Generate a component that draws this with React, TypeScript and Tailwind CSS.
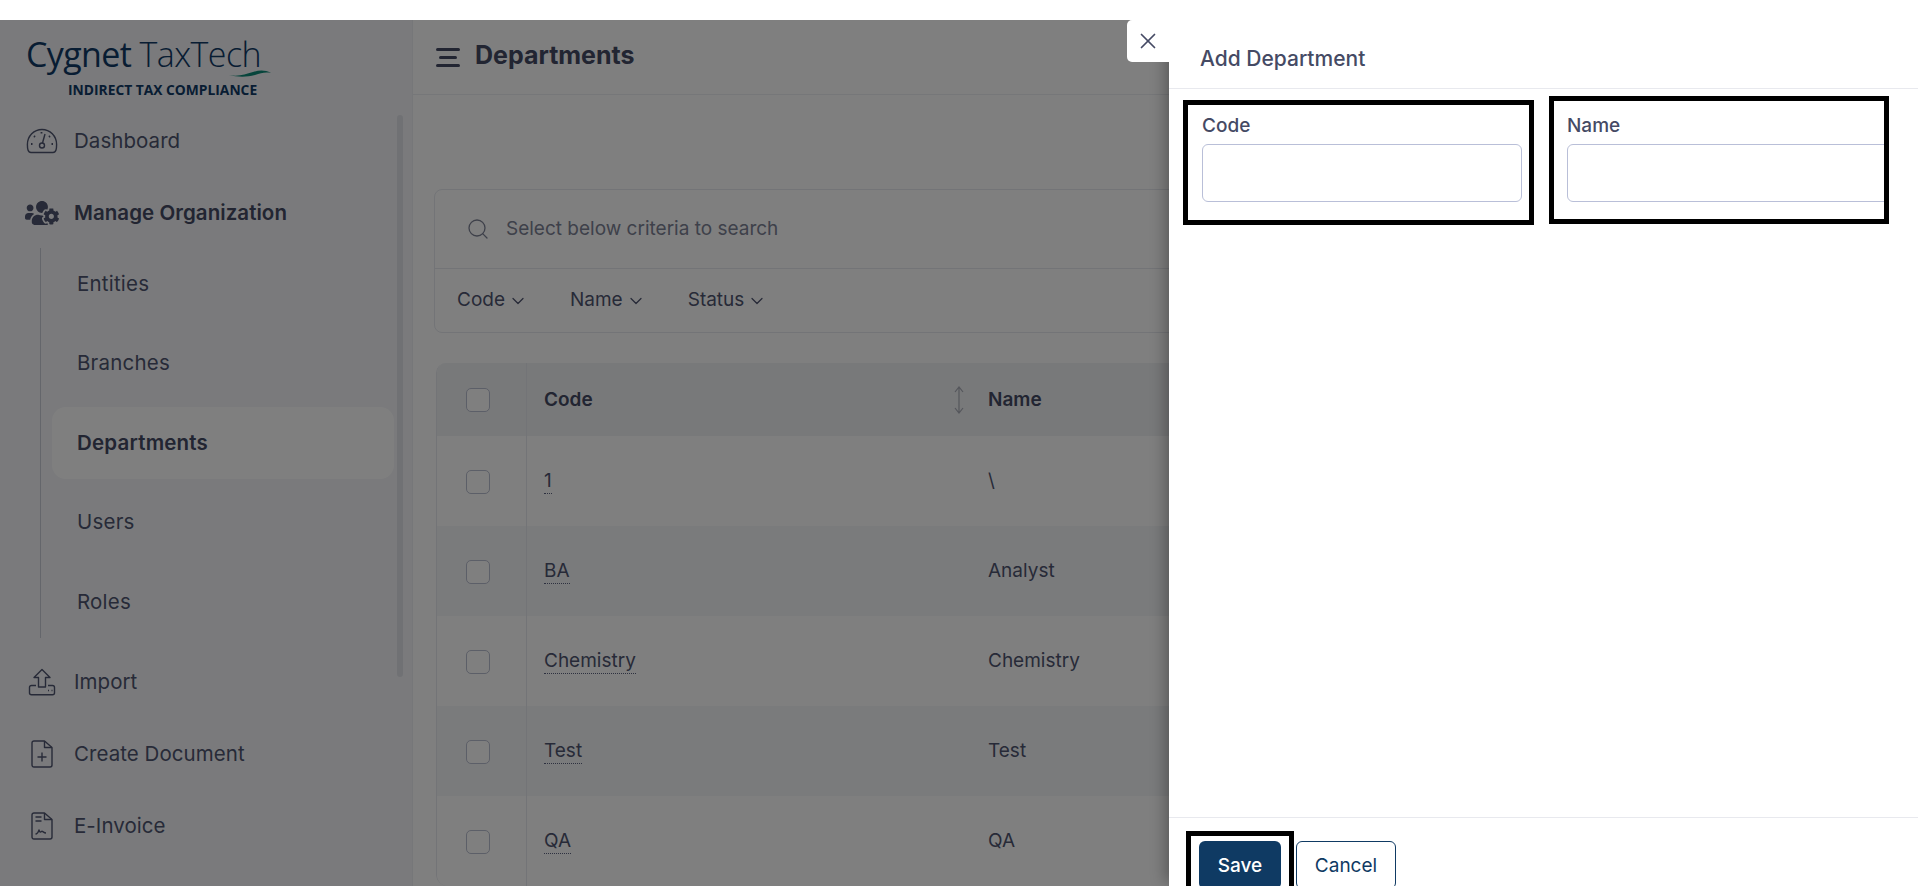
import { ChevronDown, Search, X } from "lucide-react"
import { FaUsersCog } from "react-icons/fa"

const subItems = ["Entities", "Branches", "Departments", "Users", "Roles"]

const rows = [
  { code: "1", name: "\\" },
  { code: "BA", name: "Analyst" },
  { code: "Chemistry", name: "Chemistry" },
  { code: "Test", name: "Test" },
  { code: "QA", name: "QA" },
]

function GaugeIcon() {
  return (
    <svg width="32" height="26" viewBox="0 0 32 26" fill="none" stroke="currentColor" strokeWidth="1.4">
      <path d="M5 24.500h22c1.500 0 2.500-1 3-2.500.4-1.200.6-3 .6-5.500C30.600 8 24 1.500 16 1.500S1.400 8 1.400 16.500c0 2.500.2 4.300.6 5.500.5 1.500 1.500 2.500 3 2.500z" />
      <circle cx="16" cy="17.500" r="2.500" />
      <path d="M16.500 15l2.500-9" />
      <path d="M15.500 4v1.500M8 8l1 1M24 8l-1 1M5 16h1.500M25.500 16h1.500" strokeWidth="1.800" />
    </svg>
  )
}

function ImportIcon() {
  return (
    <svg width="28" height="28" viewBox="0 0 28 28" fill="none" stroke="currentColor" strokeWidth="1.4" strokeLinejoin="round">
      <path d="M14 1.500L22 9.500h-4.500V19h-7V9.500H6z" />
      <path d="M8 17.500H3.500c-1.200 0-2 .8-2 2v5.500c0 1 .8 1.700 2 1.700h21c1.200 0 2-.7 2-1.700v-5.500c0-1.200-.8-2-2-2H20" />
      <path d="M20 22.500h1M23.500 22.500h1" />
    </svg>
  )
}

function DocPlusIcon() {
  return (
    <svg width="22" height="28" viewBox="0 0 22 28" fill="none" stroke="currentColor" strokeWidth="1.4" strokeLinejoin="round">
      <path d="M3 1h10.500L21 7.500V25c0 1.200-.8 2-2 2H3c-1.200 0-2-.8-2-2V3c0-1.200.8-2 2-2z" />
      <path d="M13.500 1v6.500H21" />
      <path d="M11 12.500v9M6.500 17h9" />
    </svg>
  )
}

function DocChartIcon() {
  return (
    <svg width="22" height="28" viewBox="0 0 22 28" fill="none" stroke="currentColor" strokeWidth="1.4" strokeLinejoin="round">
      <path d="M3 1h10.500L21 7.500V25c0 1.200-.8 2-2 2H3c-1.200 0-2-.8-2-2V3c0-1.200.8-2 2-2z" />
      <path d="M13.500 1v6.500H21" />
      <path d="M4.500 5h6M4.500 9h6" />
      <path d="M4.500 22c2 0 2.500-1 3.500-4 1 2.500 1.500 2.500 2.500 1.500s2 1.500 4.500 1.500" />
    </svg>
  )
}

function SortIcon() {
  return (
    <svg width="14" height="28" viewBox="0 0 14 28" fill="none" stroke="#a9acb6" strokeWidth="1.2">
      <path d="M7 1v26M3 6l4-5 4 5M3 22l4 5 4-5" />
    </svg>
  )
}

function Sidebar() {
  return (
    <aside className="relative w-[413px] shrink-0 bg-[#f4f5f8] text-[#4f5570] border-r border-[#eceef3]">
      <div className="h-[85px] pl-[26px] pt-[14px] relative">
        <div className="font-['Open_Sans',sans-serif] text-[34px] leading-[40px] tracking-[-0.6px] whitespace-nowrap text-[#103a66]">
          Cygnet <span className="font-light">TaxTech</span>
        </div>
        <svg width="42" height="8" viewBox="0 0 42 8" className="absolute left-[229px] top-[49px]">
          <path d="M0 6c10 2 16-1 24-3 7-2 12-2 18 1-6-1-10 0-16 2-9 2.500-18 2-26 0z" fill="#0f8a78" />
        </svg>
        <div className="font-['Open_Sans',sans-serif] font-bold text-[13.800px] leading-[18px] ml-[42px] mt-[7px] text-[#103a66] whitespace-nowrap">
          INDIRECT TAX COMPLIANCE
        </div>
      </div>

      <NavRow icon={<GaugeIcon />} label="Dashboard" />
      <NavRow icon={<FaUsersCog size={34} />} label="Manage Organization" bold />

      <ul className="ml-[40px] -mt-[1px] pl-[11px] border-l border-[#c9ccd6] flex flex-col gap-[7.500px]">
        {subItems.map((item) => (
          <li
            key={item}
            className={`h-[72px] w-[342px] pl-[25px] flex items-center text-[20.500px] tracking-[0.2px] rounded-[14px] ${
              item === "Departments" ? "font-semibold bg-[#ffffff] text-[#454a64]" : ""
            }`}
          >
            {item}
          </li>
        ))}
      </ul>

      <div className="mt-[8px]">
        <NavRow icon={<ImportIcon />} label="Import" />
        <NavRow icon={<DocPlusIcon />} label="Create Document" />
        <NavRow icon={<DocChartIcon />} label="E-Invoice" />
      </div>

      <div className="absolute left-[397px] top-[95px] w-[6px] h-[562px] rounded-full bg-[#e1e3e9]" />
    </aside>
  )
}

function NavRow({ icon, label, bold }: { icon: React.ReactNode; label: string; bold?: boolean }) {
  return (
    <div className="h-[72px] flex items-center">
      <div className="w-[74px] pl-[25px] flex justify-start shrink-0">
        <div className="w-[34px] flex justify-center">{icon}</div>
      </div>
      <span className={`text-[20.500px] tracking-[0.05px] ${bold ? "font-semibold text-[#454a64]" : ""}`}>{label}</span>
    </div>
  )
}

function Checkbox() {
  return <div className="w-[24px] h-[24px] rounded-[5px] border border-[#b9bed0] bg-white" />
}

function MainArea() {
  return (
    <main className="flex-1 min-w-0 bg-[#ffffff] text-[#4f5570] overflow-hidden">
      <header className="h-[75px] flex items-center pl-[23px] border-b border-[#eceef3]">
        <div className="w-[24px] flex flex-col gap-[5px]">
          <div className="h-[3px] bg-[#454a64] rounded" />
          <div className="h-[3px] mx-[3px] bg-[#454a64] rounded" />
          <div className="h-[3px] bg-[#454a64] rounded" />
        </div>
        <h1 className="ml-[15px] -mt-[2px] text-[25px] font-bold text-[#454a64]">Departments</h1>
      </header>

      <section className="ml-[21px] mt-[94px] w-[1400px] h-[144px] rounded-[8px] border border-[#e6e8ee]">
        <div className="h-[79px] flex items-center pl-[31px] border-b border-[#e6e8ee] text-[#7d8295]">
          <Search size={24} strokeWidth={1.3} />
          <span className="ml-[16px] text-[19px]">Select below criteria to search</span>
        </div>
        <div className="h-[63px] flex items-center pl-[22px] gap-[42px] text-[19px]">
          {["Code", "Name", "Status"].map((f) => (
            <div key={f} className="flex items-center gap-[3px]">
              {f}
              <ChevronDown size={20} strokeWidth={1.5} />
            </div>
          ))}
        </div>
      </section>

      <section className="ml-[23px] mt-[30px] w-[1400px] rounded-b-[12px] rounded-t-[10px] border-l border-[#e6e8ee] overflow-hidden">
        <div className="h-[73px] flex items-center bg-[#f0f2f5] font-semibold text-[19px] text-[#454a64]">
          <div className="w-[90px] h-full flex items-center justify-center border-r border-[#e6e8ee] pr-[8px]">
            <Checkbox />
          </div>
          <div className="w-[443px] pl-[17px] pr-[4px] pt-[1px] flex items-center justify-between">
            Code
            <SortIcon />
          </div>
          <div className="pl-[18px] pt-[1px]">Name</div>
        </div>
        {rows.map((row, i) => (
          <div key={row.code} className={`h-[90px] flex items-center text-[19px] ${i % 2 === 1 ? "bg-[#f5f6f9]" : "bg-white"}`}>
            <div className="w-[90px] h-full flex items-center justify-center border-r border-[#e6e8ee] pr-[8px] pt-[2px]">
              <Checkbox />
            </div>
            <div className="w-[443px] pl-[17px]">
              <span className="border-b border-dotted border-[#5c6280] pb-[1px]">{row.code}</span>
            </div>
            <div className="pl-[18px]">{row.name}</div>
          </div>
        ))}
      </section>
    </main>
  )
}

function Drawer() {
  return (
    <div className="absolute right-0 top-[20px] h-[866px] w-[749px] bg-white flex flex-col shadow-[-8px_0_14px_-4px_rgba(0,0,0,0.3)]">
      <button className="absolute -left-[42px] top-0 w-[42px] h-[42px] bg-white rounded-l-[5px] flex items-center justify-center text-[#454a64]">
        <X size={26} strokeWidth={1.6} />
      </button>

      <div className="h-[69px] shrink-0 pl-[31px] pt-[10px] flex items-center border-b border-[#e8e9ee]">
        <h2 className="text-[21px] font-medium text-[#454a64]">Add Department</h2>
      </div>

      <div className="flex-1 flex items-start pl-[14px] gap-[15px]">
        <div className="mt-[11px] w-[351px] h-[125px] border-[5px] border-black pl-[14px] pr-[7px] pt-[6px]">
          <label className="block h-[33px] leading-[30px] text-[19px] font-medium text-[#454a64]">Code</label>
          <input className="block w-full h-[58px] rounded-[6px] border border-[#b9bfd8] bg-white" />
        </div>
        <div className="mt-[7px] w-[340px] h-[128px] border-[5px] border-black pl-[13px] pt-[10px] overflow-hidden">
          <label className="block h-[33px] leading-[30px] text-[19px] font-medium text-[#454a64]">Name</label>
          <input className="block w-[340px] h-[58px] rounded-[6px] border border-[#b9bfd8] bg-white" />
        </div>
      </div>

      <div className="h-[69px] shrink-0 border-t border-[#e8e9ee] pl-[17px] pt-[13px] flex items-start overflow-hidden">
        <div className="w-[108px] h-[70px] border-[5px] border-black pl-[8px] pt-[5px] shrink-0">
          <button className="w-[82px] h-[48px] pt-[2px] rounded-[6px] bg-[#0f3a63] text-white text-[19px] font-medium">Save</button>
        </div>
        <button className="ml-[2px] mt-[10px] w-[100px] h-[48px] pt-[2px] rounded-[6px] border border-[#0f3a63] text-[#0f3a63] text-[19px]">
          Cancel
        </button>
      </div>
    </div>
  )
}

export default function App() {
  return (
    <div className="relative h-[886px] overflow-hidden bg-white font-['Inter',sans-serif]">
      <div className="relative z-10 h-[20px] bg-white" />
      <div className="relative h-[866px] flex overflow-hidden">
        <Sidebar />
        <MainArea />
        {/* dimmed backdrop behind the drawer */}
        <div className="absolute inset-0 bg-black/50" />
      </div>
      <Drawer />
    </div>
  )
}
